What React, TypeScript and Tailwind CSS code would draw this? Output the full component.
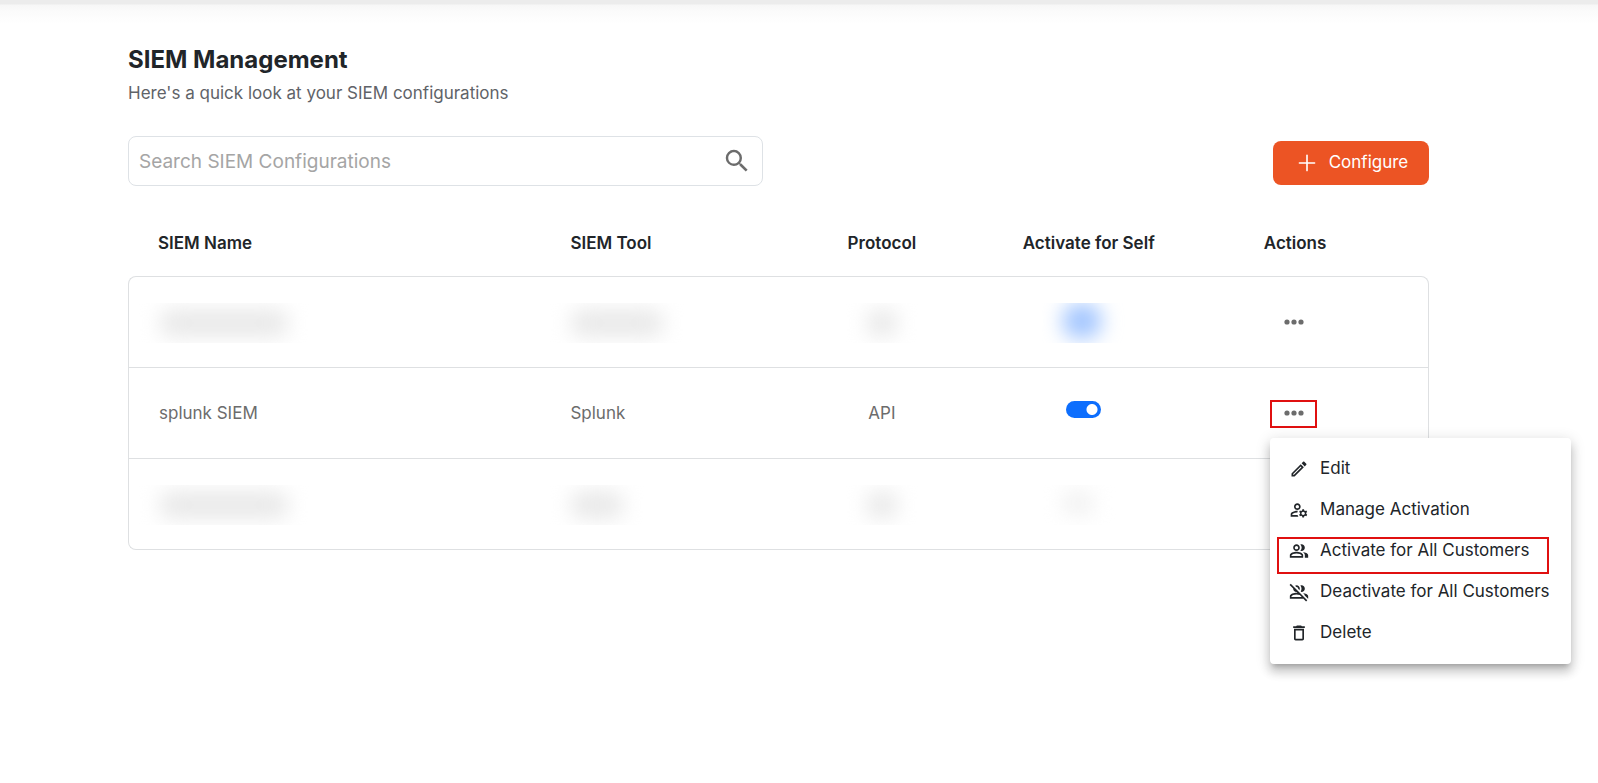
import React, { useState } from "react";
import clsx from "clsx";
import { Plus } from "lucide-react";
import {
    MdDeleteOutline,
    MdOutlineEdit,
    MdOutlineGroupOff,
    MdOutlineManageAccounts,
    MdOutlinePeopleAlt,
    MdSearch,
} from "react-icons/md";

type Row = {
    id: number;
    name?: string;
    tool?: string;
    protocol?: string;
    active: boolean;
};

const rows: Row[] = [
    { id: 1, active: true },
    { id: 2, name: "splunk SIEM", tool: "Splunk", protocol: "API", active: true },
    { id: 3, active: false },
];

const menuItems = [
    { label: "Edit", icon: MdOutlineEdit },
    { label: "Manage Activation", icon: MdOutlineManageAccounts },
    { label: "Activate for All Customers", icon: MdOutlinePeopleAlt, marked: true },
    { label: "Deactivate for All Customers", icon: MdOutlineGroupOff },
    { label: "Delete", icon: MdDeleteOutline },
];

// hidden values show up as a soft smudge
const Smudge = ({ className }: { className: string }) => (
    <div className="-mx-5 inline-flex h-10 items-center overflow-hidden px-5 align-middle">
        <div className={clsx("rounded-full blur-[10px]", className)} />
    </div>
);

const Dots = () => (
    <svg viewBox="0 0 20 6" className="h-[6px] w-5 fill-[#6c6c6c]">
        <circle cx="3" cy="3" r="2.6" />
        <circle cx="10" cy="3" r="2.6" />
        <circle cx="17" cy="3" r="2.6" />
    </svg>
);

const ActionsMenu = () => (
    <ul className="absolute top-full left-0 z-10 mt-[10px] h-[226px] w-[301px] rounded-[4px] bg-white py-[10px] shadow-[0_5px_5px_-3px_rgba(0,0,0,0.2),0_8px_10px_1px_rgba(0,0,0,0.14),0_3px_14px_2px_rgba(0,0,0,0.12)]">
        {menuItems.map(({ label, icon: Icon, marked }) => (
            <li key={label} className="relative">
                <button className="flex h-[41px] w-full items-center gap-[11px] pl-[19px] text-left text-[17px] whitespace-nowrap text-[#212529]">
                    <Icon className="h-5 w-5 shrink-0" />
                    {label}
                </button>
                {marked && (
                    <span className="pointer-events-none absolute top-[7px] left-[7px] h-[37px] w-[272px] border-2 border-[#e01010]" />
                )}
            </li>
        ))}
    </ul>
);

const App = () => {
    const [search, setSearch] = useState("");
    const [openId, setOpenId] = useState<number | null>(2);
    return (
        <div className="min-h-screen bg-white font-['Inter',sans-serif] text-[#212529]">
            <div className="h-6 bg-[linear-gradient(#ececec_0,#ececec_4px,#f7f7f7_5px,#fbfbfb_12px,#ffffff_24px)]" />
            <main className="pt-[18px] pr-[169px] pl-32">
                <h1 className="text-2xl leading-9 font-bold">SIEM Management</h1>
                <p className="text-[17px] leading-[30px] text-[#5f6368]">
                    Here's a quick look at your SIEM configurations
                </p>
                <div className="mt-7 flex items-center justify-between">
                    <label className="flex h-[50px] w-[48.8%] items-center rounded-lg border border-[#dee2e6] pr-[10px] pl-[10px]">
                        <input
                            type="text"
                            aria-label="Search SIEM Configurations"
                            placeholder="Search SIEM Configurations"
                            value={search}
                            onChange={(e) => setSearch(e.target.value)}
                            className="min-w-0 flex-1 pt-[2px] text-[19px] outline-none placeholder:text-[#a5a5a5]"
                        />
                        <MdSearch className="h-[30px] w-[30px] text-[#6c6c6c]" />
                    </label>
                    <button className="mt-1 flex h-11 w-[156px] items-center justify-center gap-[9px] rounded-lg bg-[#ec5424] text-[17px] text-white">
                        <Plus className="h-[26px] w-[26px]" strokeWidth={1.5} />
                        Configure
                    </button>
                </div>
                <table className="mt-[23px] w-full table-fixed border-separate border-spacing-0 text-[17px]">
                    <thead>
                        <tr className="h-[67px] [&_th]:pt-[2px] [&_th]:font-semibold">
                            <th className="w-[31.7%] pl-[30px] text-left">SIEM Name</th>
                            <th className="w-[18.3%] pl-[30px] text-left">SIEM Tool</th>
                            <th className="w-[15.9%]">Protocol</th>
                            <th className="w-[15.9%]">Activate for Self</th>
                            <th className="pr-[31px]">Actions</th>
                        </tr>
                    </thead>
                    <tbody className="text-[#6c6c6c] [&_td]:border-b [&_td]:border-[#dee0e2] [&_td:first-child]:border-l [&_td:last-child]:border-r [&_tr:first-child_td]:border-t [&_tr:first-child_td:first-child]:rounded-tl-lg [&_tr:first-child_td:last-child]:rounded-tr-lg [&_tr:last-child_td:first-child]:rounded-bl-lg [&_tr:last-child_td:last-child]:rounded-br-lg">
                        {rows.map((row) => (
                            <tr key={row.id} className="h-[91px] first:h-[92px] [&_td]:pt-[2px]">
                                <td className="pl-[30px]">
                                    {row.name ?? <Smudge className="h-7 w-[130px] bg-[#e9e9e9]" />}
                                </td>
                                <td className="pl-[30px]">
                                    {row.tool ?? (
                                        <Smudge
                                            className={clsx(
                                                "h-7 bg-[#e9e9e9]",
                                                row.active ? "w-[94px]" : "w-[54px]"
                                            )}
                                        />
                                    )}
                                </td>
                                <td className="text-center">
                                    {row.protocol ?? <Smudge className="h-7 w-8 bg-[#e9e9e9]" />}
                                </td>
                                <td className="pr-[10px] text-center">
                                    {row.name ? (
                                        <input
                                            type="checkbox"
                                            role="switch"
                                            aria-label={`Activate ${row.name} for self`}
                                            defaultChecked={row.active}
                                            className="mb-[9px] h-[17px] w-[35px] appearance-none rounded-full bg-gray-300 align-middle checked:bg-[radial-gradient(circle_at_26px_50%,#ffffff_5px,#0d6efd_6px)]"
                                        />
                                    ) : (
                                        <Smudge
                                            className={
                                                row.active
                                                    ? "mr-1 mb-1 h-9 w-10 bg-[#a3c6ff]"
                                                    : "mr-3 mb-1 h-6 w-8 bg-[#f1f1f1]"
                                            }
                                        />
                                    )}
                                </td>
                                <td className="pr-[33px] text-center">
                                    <div className="relative mx-auto w-[47px]">
                                        <button
                                            aria-label="Actions"
                                            onClick={() => setOpenId(openId === row.id ? null : row.id)}
                                            className={clsx(
                                                "flex h-7 w-full items-center justify-center border-2 pb-[2px]",
                                                openId === row.id ? "border-[#e01010]" : "border-transparent"
                                            )}
                                        >
                                            <Dots />
                                        </button>
                                        {openId === row.id && <ActionsMenu />}
                                    </div>
                                </td>
                            </tr>
                        ))}
                    </tbody>
                </table>
            </main>
        </div>
    );
};

export default App;
